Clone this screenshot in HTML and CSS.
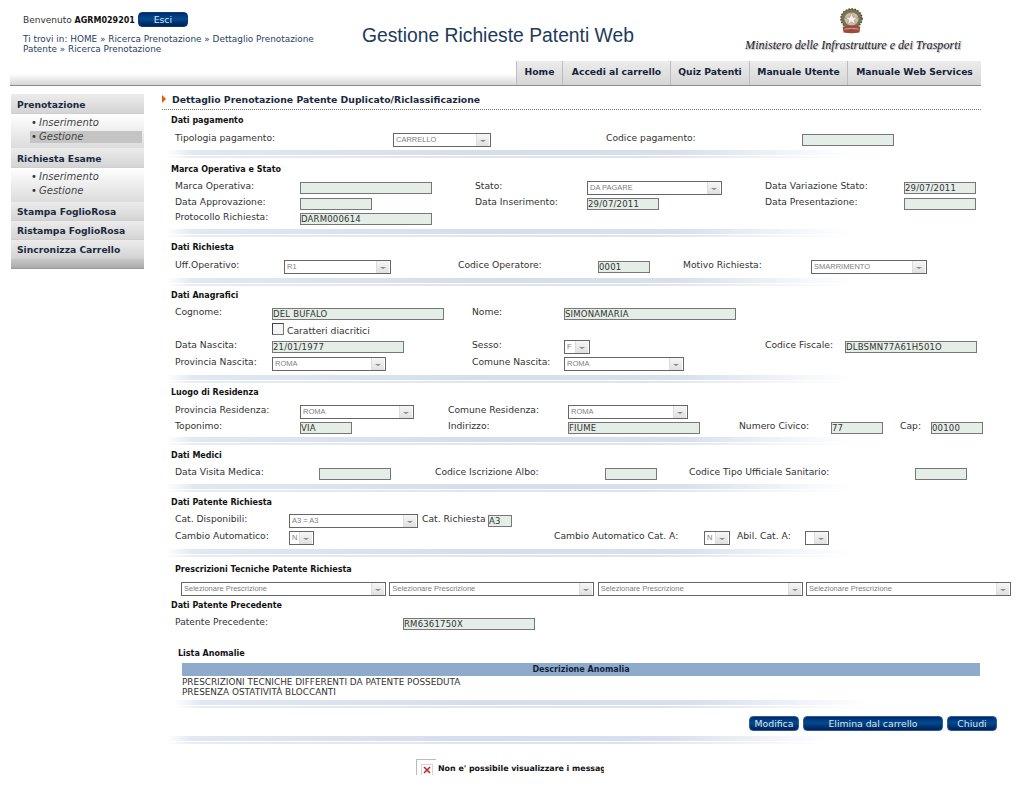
FILE: index.html
```html
<!DOCTYPE html>
<html lang="it">
<head>
<meta charset="utf-8">
<title>Gestione Richieste Patenti Web</title>
<link rel="stylesheet" href="styles.css">
</head>
<body>
<header class="top">
  <div class="user">
    <div class="welcome"><span>Benvenuto <b>AGRM029201</b></span><button class="btn esci">Esci</button></div>
    <p class="crumbs">Ti trovi in: HOME » Ricerca Prenotazione » Dettaglio Prenotazione Patente » Ricerca Prenotazione</p>
  </div>
  <h1 class="apptitle">Gestione Richieste Patenti Web</h1>
  <div class="logo">
    <svg class="emblem" viewBox="0 0 26 32" width="23" height="26" preserveAspectRatio="none" aria-hidden="true">
      <circle cx="13" cy="13" r="12" fill="#77744e"/>
      <circle cx="13" cy="13" r="12" fill="none" stroke="#4c4a30" stroke-width="1.500" stroke-dasharray="2 1.500"/>
      <circle cx="13" cy="13.500" r="8" fill="#c4bfae"/>
      <polygon points="13,6 15,11.500 20.500,11.500 16,15 17.700,20.500 13,17.200 8.300,20.500 10,15 5.500,11.500 11,11.500" fill="#f4f1ea" stroke="#b56a62" stroke-width=".6"/>
      <path d="M3 23 Q13 20 23 23 L22 30 Q13 32 4 30 Z" fill="#9c4a3a"/>
      <path d="M5 26 Q13 24 21 26" stroke="#d8b9a8" stroke-width="1" fill="none"/>
    </svg>
    <div class="ministry">Ministero delle Infrastrutture e dei Trasporti</div>
  </div>
</header>
<nav class="navband">
  <a class="tab tab-home">Home</a><a class="tab tab-cart">Accedi al carrello</a><a class="tab tab-quiz">Quiz Patenti</a><a class="tab tab-man">Manuale Utente</a><a class="tab tab-ws">Manuale Web Services</a>
</nav>
<div class="layout">
  <aside class="side">
    <div class="shead">Prenotazione</div>
    <ul class="slist"><li>Inserimento</li><li class="on">Gestione</li></ul>
    <div class="shead">Richiesta Esame</div>
    <ul class="slist"><li>Inserimento</li><li>Gestione</li></ul>
    <div class="shead small">Stampa FoglioRosa</div>
    <div class="shead small">Ristampa FoglioRosa</div>
    <div class="shead small">Sincronizza Carrello</div>
    <div class="sfoot"></div>
  </aside>
  <main class="main">
    <h2 class="pagetitle">Dettaglio Prenotazione Patente Duplicato/Riclassificazione</h2>

    <section class="sec s1">
      <h3>Dati pagamento</h3>
      <div class="rows">
        <div class="row g-pay"><label>Tipologia pagamento:</label><div class="sel w98">CARRELLO<i></i></div><label>Codice pagamento:</label><input class="w92" readonly></div>
      </div>
      <div class="sep"></div>
    </section>

    <section class="sec s2">
      <h3>Marca Operativa e Stato</h3>
      <div class="rows">
        <div class="row g-marca"><label>Marca Operativa:</label><input class="w132" readonly><label>Stato:</label><div class="sel w135">DA PAGARE<i></i></div><label>Data Variazione Stato:</label><input class="w72" value="29/07/2011" readonly></div>
        <div class="row g-marca h15"><label>Data Approvazione:</label><input class="w72" readonly><label>Data Inserimento:</label><input class="w72" value="29/07/2011" readonly><label>Data Presentazione:</label><input class="w72" readonly></div>
        <div class="row g-marca"><label>Protocollo Richiesta:</label><input class="w132" value="DARM000614" readonly></div>
      </div>
      <div class="sep"></div>
    </section>

    <section class="sec s3">
      <h3>Dati Richiesta</h3>
      <div class="rows">
        <div class="row g-rich"><label>Uff.Operativo:</label><div class="sel w107">R1<i></i></div><label>Codice Operatore:</label><input class="w52" value="0001" readonly><label>Motivo Richiesta:</label><div class="sel w116">SMARRIMENTO<i></i></div></div>
      </div>
      <div class="sep"></div>
    </section>

    <section class="sec s4">
      <h3>Dati Anagrafici</h3>
      <div class="rows">
        <div class="row g-anag"><label>Cognome:</label><input class="w172" value="DEL BUFALO" readonly><label>Nome:</label><input class="w172" value="SIMONAMARIA" readonly></div>
        <div class="row g-anag h17"><span></span><div class="diacr"><span class="check"></span><label>Caratteri diacritici</label></div></div>
        <div class="row g-anag h17"><label>Data Nascita:</label><input class="w132" value="21/01/1977" readonly><label>Sesso:</label><div class="sel w26">F<i></i></div><label>Codice Fiscale:</label><input class="w132" value="DLBSMN77A61H501O" readonly></div>
        <div class="row g-anag"><label>Provincia Nascita:</label><div class="sel w114">ROMA<i></i></div><label>Comune Nascita:</label><div class="sel w120">ROMA<i></i></div></div>
      </div>
      <div class="sep"></div>
    </section>

    <section class="sec s5">
      <h3>Luogo di Residenza</h3>
      <div class="rows">
        <div class="row g-res"><label>Provincia Residenza:</label><div class="sel w114">ROMA<i></i></div><label>Comune Residenza:</label><div class="sel w120">ROMA<i></i></div></div>
        <div class="row g-res"><label>Toponimo:</label><input class="w52" value="VIA" readonly><label>Indirizzo:</label><input class="w132" value="FIUME" readonly><label>Numero Civico:</label><input class="w52" value="77" readonly><label>Cap:</label><input class="w52" value="00100" readonly></div>
      </div>
      <div class="sep"></div>
    </section>

    <section class="sec s6">
      <h3>Dati Medici</h3>
      <div class="rows">
        <div class="row g-med"><label>Data Visita Medica:</label><input class="w72" readonly><label>Codice Iscrizione Albo:</label><input class="w52" readonly><label>Codice Tipo Ufficiale Sanitario:</label><input class="w52" readonly></div>
      </div>
      <div class="sep"></div>
    </section>

    <section class="sec s7">
      <h3>Dati Patente Richiesta</h3>
      <div class="rows">
        <div class="row g-pat1 h17"><label>Cat. Disponibili:</label><div class="sel w129">A3 = A3<i></i></div><label>Cat. Richiesta</label><input class="w24" value="A3" readonly></div>
        <div class="row g-pat2"><label>Cambio Automatico:</label><div class="sel w25">N<i></i></div><label>Cambio Automatico Cat. A:</label><div class="sel w26">N<i></i></div><label>Abil. Cat. A:</label><div class="sel w24"><i></i></div></div>
      </div>
      <div class="sep"></div>
    </section>

    <section class="sec s8">
      <h3 class="indent">Prescrizioni Tecniche Patente Richiesta</h3>
      <div class="presc">
        <div class="sel">Selezionare Prescrizione<i></i></div>
        <div class="sel">Selezionare Prescrizione<i></i></div>
        <div class="sel">Selezionare Prescrizione<i></i></div>
        <div class="sel">Selezionare Prescrizione<i></i></div>
      </div>
    </section>

    <section class="sec s9">
      <h3>Dati Patente Precedente</h3>
      <div class="rows">
        <div class="row g-prec"><label>Patente Precedente:</label><input class="w132" value="RM6361750X" readonly></div>
      </div>
    </section>

    <section class="sec s10">
      <h3 class="indent2">Lista Anomalie</h3>
      <table class="anom">
        <thead><tr><th>Descrizione Anomalia</th></tr></thead>
        <tbody>
          <tr><td>PRESCRIZIONI TECNICHE DIFFERENTI DA PATENTE POSSEDUTA</td></tr>
          <tr><td>PRESENZA OSTATIVITÀ BLOCCANTI</td></tr>
        </tbody>
      </table>
      <div class="sep sep-in"></div>
    </section>

    <div class="actions">
      <button class="btn b50">Modifica</button><button class="btn b140">Elimina dal carrello</button><button class="btn b50">Chiudi</button>
    </div>
    <div class="sep sep-last"></div>

    <div class="broken">
      <span class="bicon"><svg viewBox="0 0 12 12" width="12" height="12" aria-hidden="true"><rect x=".5" y=".5" width="11" height="11" fill="#fff" stroke="#d4d4d4"/><path d="M3 3 L9 9 M9 3 L3 9" stroke="#d0202a" stroke-width="1.600"/></svg></span>
      <span class="btext">Non e' possibile visualizzare i messaggi</span>
    </div>
  </main>
</div>
</body>
</html>
```

FILE: styles.css
```css
html, body { margin: 0; padding: 0; background: #fff; }
html { overflow: hidden; }
body { width: 1024px; height: 787px; overflow: hidden; font-family: "DejaVu Sans", Verdana, sans-serif; font-size: 9px; color: #333; }
p, h1, h2, h3, ul { margin: 0; padding: 0; }

/* header */
.top { display: flex; height: 57px; }
.user { width: 316px; margin-left: 23px; margin-right: 23px; padding-top: 12px; }
.welcome { display: flex; align-items: center; height: 15px; gap: 3px; color: #333; font-size: 9px; }
.welcome b { color: #111; font-size: 8px; }
.crumbs { margin-top: 7px; font-size: 8.900px; line-height: 10px; color: #1f3f66; }
.apptitle { width: 383px; padding-top: 24px; font: normal 19.300px/24px "Liberation Sans", Arial, sans-serif; color: #1c3a5a; }
.logo { width: 216px; display: flex; flex-direction: column; align-items: center; padding-top: 8px; }
.emblem { margin-right: 3px; flex: none; }
.ministry { margin-top: 4px; font: italic 12.100px/14px "Liberation Serif", serif; color: #1a1a2a; white-space: nowrap; text-shadow: 1px 1px 1px #aaa; }

/* buttons */
.btn { height: 15px; padding: 0; border: 1px solid #2a5aa8; border-radius: 4px; background: linear-gradient(#022a66, #024a90 45%, #011f52); color: #d9e6f2; font: 9.300px/12px "DejaVu Sans", Verdana, sans-serif; text-align: center; }
.esci { width: 50px; border-color: #0a3a8a; }
.b50 { width: 50px; }
.b140 { width: 140px; }

/* nav */
.navband { display: flex; justify-content: flex-end; align-items: flex-end; height: 24px; margin: 0 43px 0 10px; padding-top: 4px; border-bottom: 1px solid #8c8c8c; background: linear-gradient(#fff 60%, #d6d6d6); }
.tab { display: block; height: 24px; box-sizing: border-box; text-align: center; font-weight: bold; font-size: 9.200px; line-height: 21px; color: #14233a; background: linear-gradient(#ececec, #d6d6d6); border-left: 1px solid #bdbdbd; }
.tab-home { width: 46px; }
.tab-cart { width: 108px; }
.tab-quiz { width: 79px; }
.tab-man { width: 98px; }
.tab-ws { width: 134px; }

/* layout */
.layout { display: flex; margin-top: 8px; }
.side { flex: none; width: 133px; margin-left: 11px; margin-right: 18px; }
.shead { height: 20px; box-sizing: border-box; padding-left: 6px; font-weight: bold; font-size: 9.200px; line-height: 21px; color: #1a2a40; background: linear-gradient(#ececec, #d4d4d4); border-bottom: 1px solid #cfcfcf; }
.shead.small { height: 19px; line-height: 20px; }
.slist { list-style: none; height: 34px; box-sizing: border-box; padding: 2px 2px 0 19px; background: linear-gradient(#fff, #dcdcdc); }
.slist li { height: 14px; line-height: 14px; font-size: 10px; font-style: italic; color: #444; }
.slist li::before { content: "•"; display: inline-block; width: 8px; margin-left: 1px; font-style: normal; color: #333; }
.slist li.on { background: linear-gradient(transparent 1px, #c4c4c4 1px, #c4c4c4 13px, transparent 13px); }
.sfoot { height: 10px; background: linear-gradient(#c9c9c9, #a9a9a9); border-bottom: 1px solid #999; box-sizing: border-box; }

.main { flex: none; width: 862px; }
.pagetitle { height: 15px; margin-right: 43px; border-bottom: 1px dotted #777; padding-left: 10px; font-size: 9.300px; line-height: 12px; font-weight: bold; color: #1a2a40; }
.pagetitle::before { content: ""; display: inline-block; width: 0; height: 0; margin-left: -10px; margin-right: 6px; border-left: 4px solid #e8590c; border-top: 4px solid transparent; border-bottom: 4px solid transparent; vertical-align: 0; }

/* sections */
h3 { height: 14px; padding-left: 9px; font-size: 8px; line-height: 15px; font-weight: bold; color: #111; }
h3.indent { padding-left: 13px; }
h3.indent2 { padding-left: 16px; }
.rows { padding-left: 13px; }
.row { display: grid; height: 16px; align-items: start; }
.row.h15 { height: 15px; }
.row.h17 { height: 17px; }
label { display: block; height: 12px; font-size: 9.200px; line-height: 12px; color: #333; white-space: nowrap; }

.s1 { padding-top: 3px; } .s1 .rows { margin-top: 5px; } .s1 .sep { margin-top: 2px; }
.s2 { padding-top: 4px; } .s2 .rows { margin-top: 4px; } .s2 .sep { margin-top: 2px; }
.s3 { padding-top: 3px; } .s3 .rows { margin-top: 5px; } .s3 .sep { margin-top: 3px; }
.s4 { padding-top: 2px; } .s4 .rows { margin-top: 4px; } .s4 .sep { margin-top: 3px; }
.s5 { padding-top: 2px; } .s5 .rows { margin-top: 5px; } .s5 .sep { margin-top: 1px; }
.s6 { padding-top: 3px; } .s6 .rows { margin-top: 4px; } .s6 .sep { margin-top: 2px; }
.s7 { padding-top: 3px; } .s7 .rows { margin-top: 4px; } .s7 .sep { margin-top: 3px; }
.s8 { padding-top: 5px; }
.s9 { padding-top: 1px; } .s9 .rows { margin-top: 4px; }
.s10 { padding-top: 14px; }

.g-pay { grid-template-columns: 218px 213px 196px auto; }
.g-marca { grid-template-columns: 125px 175px 112px 178px 139px auto; }
.g-rich { grid-template-columns: 109px 174px 140px 85px 128px auto; }
.g-anag { grid-template-columns: 97px 200px 92px 201px 80px auto; }
.g-res { grid-template-columns: 125px 148px 120px 171px 92px 69px 31px auto; }
.g-med { grid-template-columns: 144px 116px 170px 84px 226px auto; }
.g-pat1 { grid-template-columns: 114px 133px 66px auto; }
.g-pat2 { grid-template-columns: 114px 265px 150px 33px 68px auto; }
.g-prec { grid-template-columns: 228px auto; }

/* controls */
input { display: block; box-sizing: border-box; height: 12px; margin: 2px 0 0; padding: 0; border: 1px solid #777; border-radius: 0; outline: 0; background: #e4eee6; font: 8.500px/10px "DejaVu Sans", Verdana, sans-serif; letter-spacing: .2px; color: #333; }
.sel { position: relative; display: block; box-sizing: border-box; height: 14px; margin-top: 1px; padding-left: 2px; border: 1px solid #666; background: #fff; font: 7.500px/12px "Liberation Sans", Arial, sans-serif; color: #808080; white-space: nowrap; overflow: hidden; }
.sel i { position: absolute; right: 1px; top: 0; width: 13px; height: 12px; box-sizing: border-box; border-left: 1px solid #ddd; background: linear-gradient(#f6f6f6, #e0e0e0); }
.sel i::after { content: ""; position: absolute; left: 3px; top: 6px; width: 0; height: 0; border-left: 3px solid transparent; border-right: 3px solid transparent; border-top: 2px solid #888; }
.w24 { width: 24px; } .w25 { width: 25px; } .w26 { width: 26px; }
.w52 { width: 52px; } .w72 { width: 72px; } .w92 { width: 92px; } .w98 { width: 98px; }
.w107 { width: 107px; } .w114 { width: 114px; } .w116 { width: 116px; } .w120 { width: 120px; }
.w129 { width: 129px; } .w132 { width: 132px; } .w135 { width: 135px; } .w172 { width: 172px; }

.diacr { display: flex; align-items: flex-start; gap: 3px; grid-column: 2 / span 3; }
.diacr label { margin-top: 3px; }
.check { display: block; flex: none; width: 12px; height: 12px; margin-top: 1px; box-sizing: border-box; border: 1px solid #777; border-top-color: #444; border-left-color: #444; background: #f4f4f4; }

.presc { display: grid; grid-template-columns: repeat(4, 205px); column-gap: 3.330px; height: 16px; margin: 5px 0 0 19px; width: 830px; }

/* table */
.anom { border-collapse: collapse; width: 798px; margin: 3px 0 0 20px; }
.anom th { height: 13px; padding: 0; background: #8fabcc; font-size: 8px; line-height: 13px; color: #12223c; text-align: center; }
.anom td { height: 10px; padding: 0; font-size: 8.900px; line-height: 10px; color: #333; }
.anom tbody tr:first-child td { padding-top: 1px; }

/* separators */
.sep { width: 684px; height: 8px; margin-left: 4px; background:
  linear-gradient(90deg, #fff, #e2e8f2 4%, #d5deeb 45%, #d8e0ed 75%, #fff) 0 0 / 100% 5px no-repeat,
  linear-gradient(90deg, #fff, #e6ebf4 4%, #dfe6f1 40%, #dbe3ef 70%, #fff) 0 6px / 100% 2px no-repeat; }
.sep-in { width: 696px; margin-left: 12px; margin-top: 3px; }
.sep-last { width: 664px; margin-top: 5px; }

.actions { display: flex; justify-content: flex-end; gap: 4px; width: 835px; margin-top: 8px; }

.broken { display: flex; align-items: flex-start; width: 188px; height: 16px; margin: 15px 0 0 254px; overflow: hidden; }
.bicon { display: block; flex: none; width: 20px; height: 16px; box-sizing: border-box; padding: 4px 0 0 4px; border-left: 1px solid #bbb; border-top: 1px solid #bbb; }
.btext { margin-left: 2px; padding-top: 4px; font-size: 7.900px; line-height: 12px; font-weight: bold; color: #111; white-space: nowrap; }
```
